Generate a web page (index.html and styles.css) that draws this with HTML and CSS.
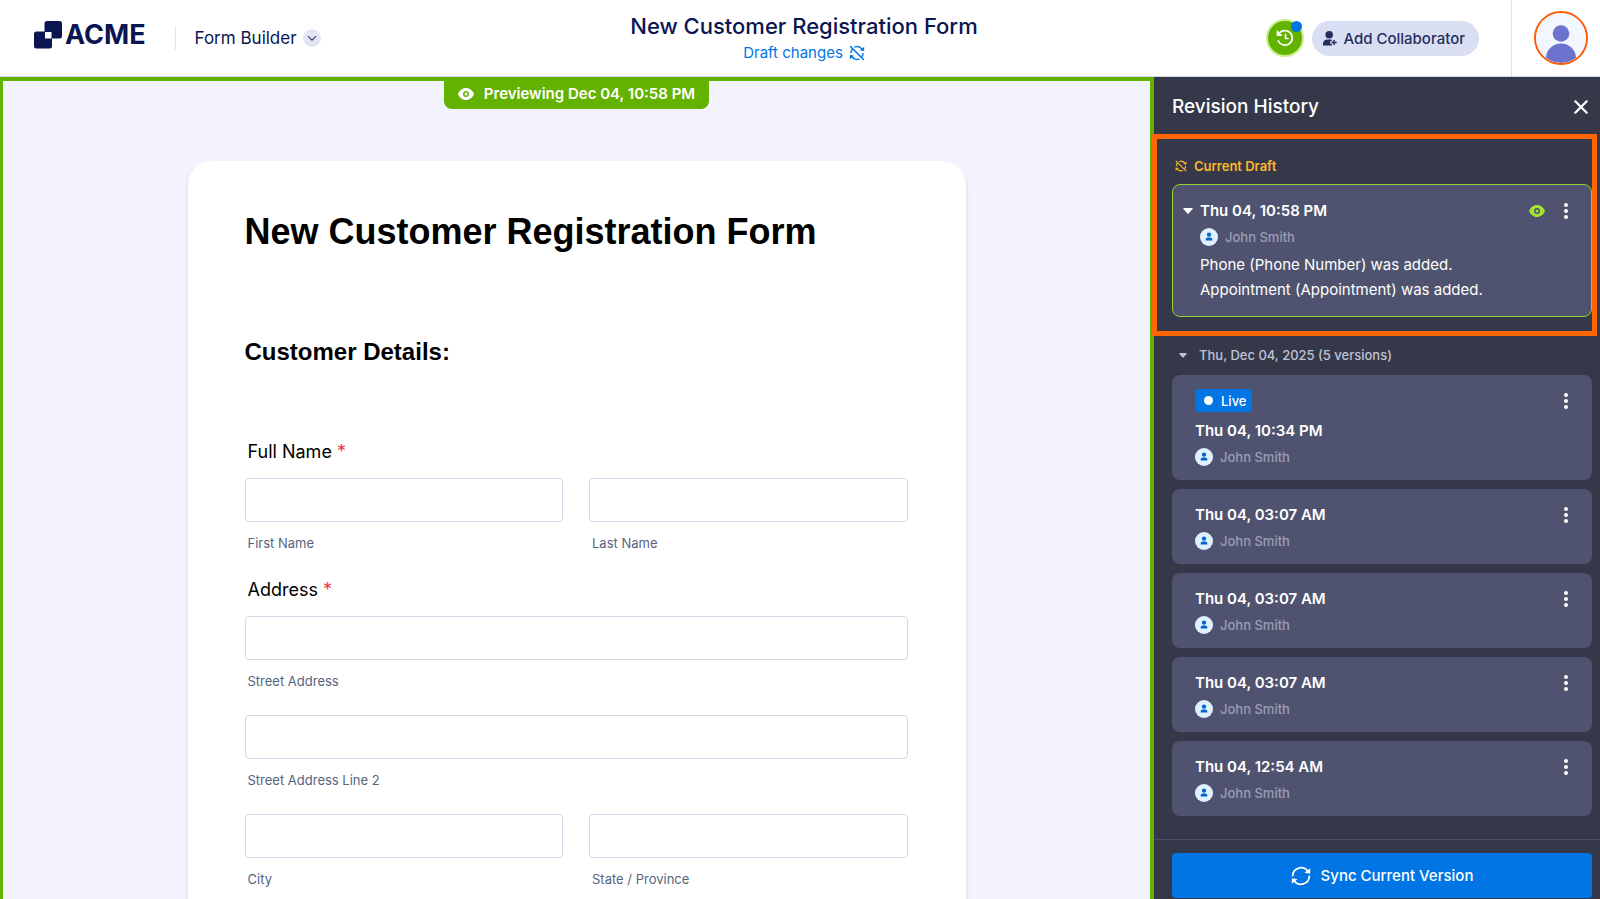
FILE: index.html
```html
<!DOCTYPE html>
<html lang="en">
<head>
<meta charset="utf-8">
<title>New Customer Registration Form</title>
<link rel="stylesheet" href="styles.css">
</head>
<body>
<svg class="sprite" aria-hidden="true">
  <symbol id="i-sync" viewBox="0 0 20 20"><g fill="none" stroke="currentColor" stroke-width="1.800" stroke-linecap="round"><path d="M1.700 9.500A8.300 8.300 0 0 1 16.800 5.300M18.300 10.500A8.300 8.300 0 0 1 3.200 14.700"/></g><path fill="currentColor" d="M19.200 2.200v5.600l-5.700-1zM.8 17.800v-5.600l5.700 1z"/></symbol>
  <symbol id="i-unsync" viewBox="0 0 16 16"><g fill="none" stroke="currentColor" stroke-width="1.500" stroke-linecap="round"><path d="M1.500 1.500l13 13M6 1.900a6.300 6.300 0 0 1 7 2.300M2 7.500a6 6 0 0 1 .8-2.700M14 8.500a6 6 0 0 1-.7 2.600M10 14.100a6.300 6.300 0 0 1-7-2.300"/></g><path fill="currentColor" d="M15.200 1.800v4.200l-4.300-.5zM.8 14.200V10l4.300.5z"/></symbol>
  <symbol id="i-person" viewBox="0 0 18 18"><circle cx="9" cy="9" r="9" fill="#dff1fe"/><circle cx="9" cy="6.700" r="2.100" fill="#0863cc"/><path fill="#0863cc" d="M5.700 12.600V11.500A1.900 1.900 0 0 1 7.600 9.600h2.800a1.900 1.900 0 0 1 1.900 1.900v1.100z"/></symbol>
  <symbol id="i-dots" viewBox="0 0 4 16"><g fill="currentColor"><circle cx="2" cy="2" r="2"/><circle cx="2" cy="8" r="2"/><circle cx="2" cy="14" r="2"/></g></symbol>
  <symbol id="i-eye" viewBox="0 0 16 12"><path fill="currentColor" fill-rule="evenodd" d="M8 0c3.600 0 6.700 2.400 8 6-1.300 3.600-4.400 6-8 6S1.300 9.600 0 6c1.300-3.600 4.400-6 8-6zm0 3a3 3 0 1 0 0 6 3 3 0 0 0 0-6z"/><circle cx="8" cy="6" r="1.500" fill="currentColor"/></symbol>
  <symbol id="i-caret" viewBox="0 0 10 6"><path fill="currentColor" d="M1 0h8a.7.7 0 0 1 .6 1.100L5.600 5.600a.8.8 0 0 1-1.200 0L.4 1.100A.7.7 0 0 1 1 0z"/></symbol>
</svg>

<header class="topbar">
  <div class="brand">
    <a class="logo" href="#">
      <svg width="28" height="28" viewBox="0 0 28 28" aria-hidden="true"><path fill="#0a1551" fill-rule="evenodd" d="M13 0h12.500A2.500 2.500 0 0 1 28 2.500v12.500a2.500 2.500 0 0 1-2.500 2.500H18V25a2.500 2.500 0 0 1-2.500 2.500h-13A2.500 2.500 0 0 1 0 25V13a2.500 2.500 0 0 1 2.500-2.500h8v-8A2.500 2.500 0 0 1 13 0zm-2 11v6.500h6.500V11z"/></svg>
      <span>ACME</span>
    </a>
    <button class="product" type="button">Form Builder
      <svg width="18" height="18" viewBox="0 0 18 18" aria-hidden="true"><circle cx="9" cy="9" r="9" fill="#e3e5f5"/><path d="M5 7.200l4 4 4-4" fill="none" stroke="#343c6a" stroke-width="1.200"/></svg>
    </button>
  </div>
  <div class="doc">
    <h1>New Customer Registration Form</h1>
    <a href="#">Draft changes <svg width="16" height="16" aria-hidden="true"><use href="#i-unsync"/></svg></a>
  </div>
  <div class="actions">
    <button class="history" type="button" aria-label="Revision history">
      <svg width="18" height="18" viewBox="0 0 18 18" fill="none" stroke="#fff" stroke-width="1.700" stroke-linecap="round" stroke-linejoin="round" aria-hidden="true"><path d="M2.300 5.800A7.300 7.300 0 1 1 2.300 12M1.500 2.300v3.900h3.900M9.500 5.300v4.200H12"/></svg>
    </button>
    <button class="collab" type="button">
      <svg width="14" height="15" viewBox="0 0 14 15" fill="currentColor" aria-hidden="true"><circle cx="6.200" cy="3.800" r="3.800"/><path d="M0 14.500v-1.800A4.200 4.200 0 0 1 4.200 8.500h3.600c.4 0 .8 0 1.100.2v1.400H7.300v2.900h1.600v1.500zM10.300 9h1.500v1.800h1.900v1.500h-1.900v1.800h-1.500v-1.800H8.400v-1.500h1.900z"/></svg>
      Add Collaborator
    </button>
    <div class="account">
      <button class="avatar" type="button" aria-label="Account">
        <svg viewBox="0 0 50 50" aria-hidden="true"><circle cx="25" cy="25" r="25" fill="#f2f7ff"/><g fill="#6c73cf"><circle cx="25" cy="20.500" r="8.300"/><path d="M10 45a15 14.500 0 0 1 30 0A25 25 0 0 1 10 45z"/></g></svg>
      </button>
    </div>
  </div>
</header>

<div class="workspace">
  <main class="preview">
    <div class="badge"><svg width="16" height="12" aria-hidden="true"><use href="#i-eye"/></svg>Previewing Dec 04, 10:58 PM</div>
    <form class="sheet">
      <h2>New Customer Registration Form</h2>
      <h3>Customer Details:</h3>
      <fieldset>
        <legend>Full Name <span class="req">*</span></legend>
        <div class="grid">
          <div class="field"><input id="first" type="text"><label for="first">First Name</label></div>
          <div class="field"><input id="last" type="text"><label for="last">Last Name</label></div>
        </div>
      </fieldset>
      <fieldset>
        <legend>Address <span class="req">*</span></legend>
        <div class="grid">
          <div class="field wide"><input id="street" type="text"><label for="street">Street Address</label></div>
          <div class="field wide"><input id="street2" type="text"><label for="street2">Street Address Line 2</label></div>
          <div class="field"><input id="city" type="text"><label for="city">City</label></div>
          <div class="field"><input id="state" type="text"><label for="state">State / Province</label></div>
        </div>
      </fieldset>
    </form>
  </main>

  <aside class="panel">
    <div class="panel-head">
      <h2>Revision History</h2>
      <button class="icon-btn" type="button" aria-label="Close"><svg width="14" height="14" viewBox="0 0 14 14" aria-hidden="true"><path d="M1.300 1.300l11.400 11.400M12.700 1.300L1.300 12.700" stroke="currentColor" stroke-width="2.200" stroke-linecap="round"/></svg></button>
    </div>
    <section class="draft">
      <h3><svg width="12" height="12" aria-hidden="true"><use href="#i-unsync"/></svg>Current Draft</h3>
      <article class="rev current">
        <button class="icon-btn toggle" type="button" aria-label="Collapse"><svg width="10" height="6"><use href="#i-caret"/></svg></button>
        <div class="rev-body">
          <h4>Thu 04, 10:58 PM</h4>
          <p class="author"><svg width="18" height="18" aria-hidden="true"><use href="#i-person"/></svg>John Smith</p>
          <ul class="changes">
            <li>Phone (Phone Number) was added.</li>
            <li>Appointment (Appointment) was added.</li>
          </ul>
        </div>
        <svg class="eye" width="16" height="12" aria-hidden="true"><use href="#i-eye"/></svg>
        <button class="icon-btn more" type="button" aria-label="More"><svg width="4" height="16"><use href="#i-dots"/></svg></button>
      </article>
    </section>
    <button class="group" type="button"><svg width="8" height="5" aria-hidden="true"><use href="#i-caret"/></svg>Thu, Dec 04, 2025 (5 versions)</button>
    <div class="list">
      <article class="rev"><div class="rev-body"><span class="live">Live</span><h4>Thu 04, 10:34 PM</h4><p class="author"><svg width="18" height="18" aria-hidden="true"><use href="#i-person"/></svg>John Smith</p></div><button class="icon-btn more" type="button" aria-label="More"><svg width="4" height="16"><use href="#i-dots"/></svg></button></article>
      <article class="rev"><div class="rev-body"><h4>Thu 04, 03:07 AM</h4><p class="author"><svg width="18" height="18" aria-hidden="true"><use href="#i-person"/></svg>John Smith</p></div><button class="icon-btn more" type="button" aria-label="More"><svg width="4" height="16"><use href="#i-dots"/></svg></button></article>
      <article class="rev"><div class="rev-body"><h4>Thu 04, 03:07 AM</h4><p class="author"><svg width="18" height="18" aria-hidden="true"><use href="#i-person"/></svg>John Smith</p></div><button class="icon-btn more" type="button" aria-label="More"><svg width="4" height="16"><use href="#i-dots"/></svg></button></article>
      <article class="rev"><div class="rev-body"><h4>Thu 04, 03:07 AM</h4><p class="author"><svg width="18" height="18" aria-hidden="true"><use href="#i-person"/></svg>John Smith</p></div><button class="icon-btn more" type="button" aria-label="More"><svg width="4" height="16"><use href="#i-dots"/></svg></button></article>
      <article class="rev"><div class="rev-body"><h4>Thu 04, 12:54 AM</h4><p class="author"><svg width="18" height="18" aria-hidden="true"><use href="#i-person"/></svg>John Smith</p></div><button class="icon-btn more" type="button" aria-label="More"><svg width="4" height="16"><use href="#i-dots"/></svg></button></article>
    </div>
    <div class="panel-foot">
      <button class="sync" type="button"><svg width="20" height="20" aria-hidden="true"><use href="#i-sync"/></svg>Sync Current Version</button>
    </div>
  </aside>
</div>
</body>
</html>
```
FILE: styles.css
```css
* { box-sizing: border-box; margin: 0; }
body {
  height: 100vh;
  display: flex;
  flex-direction: column;
  overflow: hidden;
  font-family: Inter, "Liberation Sans", sans-serif;
  color: #0a1551;
}
button { border: 0; padding: 0; background: none; font: inherit; color: inherit; cursor: pointer; }
a { text-decoration: none; color: inherit; }
svg { display: block; flex: none; }
.sprite { position: absolute; width: 0; height: 0; }

.topbar {
  flex: none;
  height: 77px;
  display: grid;
  grid-template-columns: 1fr auto 1fr;
  border-bottom: 1px solid #d5d8e4;
  background: #fff;
}
.brand { display: flex; align-items: center; padding-left: 34px; }
.logo { display: flex; align-items: center; gap: 3px; padding-bottom: 7px; font-size: 27px; line-height: 28px; font-weight: 700; }
.product {
  display: flex;
  align-items: center;
  gap: 6px;
  height: 24px;
  margin-left: 29px;
  padding-left: 19px;
  border-left: 1px solid #e3e5f5;
  font-size: 17px;
}
.doc { display: flex; flex-direction: column; align-items: center; padding: 12px 0 0 8px; }
.doc h1 { font-size: 22px; line-height: 28px; font-weight: 500; color: #0a1551; }
.doc a { display: flex; align-items: center; gap: 6px; font-size: 15px; line-height: 26px; color: #0075e3; }
.actions { display: flex; align-items: center; justify-content: flex-end; gap: 8px; }
.history {
  position: relative;
  display: grid;
  place-items: center;
  width: 38px;
  height: 38px;
  border: 2px solid #c8f090;
  border-radius: 50%;
  background: #64b200;
}
.history::after {
  content: "";
  position: absolute;
  top: 0;
  right: 0;
  width: 11px;
  height: 11px;
  border-radius: 50%;
  background: #0075e3;
}
.collab {
  display: flex;
  align-items: center;
  gap: 6px;
  height: 35px;
  padding: 0 14px 0 11px;
  border-radius: 18px;
  background: #dadef3;
  font-size: 15px;
  font-weight: 500;
  color: #252d5b;
}
.account {
  display: flex;
  align-items: center;
  align-self: stretch;
  margin-left: 24px;
  padding: 0 12px 0 22px;
  border-left: 1px solid #dfe1ea;
}
.avatar { width: 54px; height: 54px; border: 2px solid #ff5a00; border-radius: 50%; overflow: hidden; }

.workspace { flex: 1; min-height: 0; display: flex; }
.preview {
  flex: 1;
  min-width: 0;
  display: flex;
  flex-direction: column;
  align-items: center;
  overflow: hidden;
  border: solid #64b200;
  border-width: 4px 4px 0 3px;
  background: #f3f3fe;
}
.badge {
  flex: none;
  display: flex;
  align-items: center;
  gap: 10px;
  height: 28px;
  padding: 0 14px 3px;
  border-radius: 0 0 8px 8px;
  background: #64b200;
  font-size: 15px;
  font-weight: 600;
  color: #fff;
}
.sheet {
  flex: none;
  width: 778px;
  max-width: 90%;
  margin-top: 52px;
  padding: 49px 58px 40px 57px;
  border-radius: 24px;
  background: #fff;
  box-shadow: 0 4px 4px rgba(87, 100, 126, 0.2);
  color: #000;
}
.sheet h2, .sheet h3 { font-family: "Liberation Sans", Arial, sans-serif; font-weight: 700; }
.sheet h2 { font-size: 36px; line-height: 44px; }
.sheet h3 { margin: 83px 0 72px; font-size: 24px; line-height: 30px; }
fieldset { min-width: 0; padding: 0; border: 0; margin-bottom: 24px; }
legend { padding: 0 3px; margin-bottom: 13px; font-size: 18px; line-height: 26px; }
.req { color: #f23a3c; }
.grid { display: grid; grid-template-columns: 1fr 1fr; gap: 24px 26px; }
.field { display: flex; flex-direction: column; gap: 11px; }
.wide { grid-column: 1 / -1; }
.field input { width: 100%; height: 44px; border: 1px solid #d3d8e8; border-radius: 4px; padding: 0 10px; font: inherit; }
.field label { padding-left: 3px; font-size: 13px; line-height: 20px; color: #57647e; }

.panel { flex: none; width: 446px; display: flex; flex-direction: column; background: #343849; color: #fff; }
.panel-head { display: flex; align-items: center; justify-content: space-between; height: 57px; padding: 3px 12px 0 18px; }
.panel-head h2 { font-size: 19px; line-height: 28px; font-weight: 500; }
.icon-btn { display: grid; place-items: center; flex: none; }
.draft {
  margin: 0 3px 0 -2px;
  padding: 17px 0 14px 15px;
  border: 5px solid #ff6500;
}
.draft h3 { display: flex; align-items: center; gap: 7px; margin: 0 0 8px 3px; font-size: 13px; line-height: 20px; font-weight: 600; color: #ffb629; }
.rev {
  display: flex;
  align-items: flex-start;
  padding: 14px 24px 11px 23px;
  border-radius: 8px;
  background: #4f536f;
}
.current { padding: 14px 23px 14px 10px; border: 1px solid #8fd335; }
.rev-body { flex: 1; }
.toggle { width: 10px; height: 24px; margin-right: 7px; }
.rev h4 { font-size: 15px; line-height: 24px; font-weight: 600; }
.author { display: flex; align-items: center; gap: 7px; margin-top: 2px; font-size: 13px; line-height: 24px; font-weight: 500; color: #9a9db5; }
.changes { margin-top: 3px; padding: 0; list-style: none; font-size: 15px; line-height: 25px; }
.eye { margin: 6px 19px 0 0; color: #a4e32e; }
.more { width: 4px; height: 24px; }
.group { display: flex; align-items: center; gap: 12px; margin: 7px 0 8px 25px; font-size: 13px; line-height: 24px; font-weight: 500; color: #c0c3d6; }
.list { display: flex; flex-direction: column; gap: 9px; padding: 0 8px 0 18px; }
.live {
  display: flex;
  align-items: center;
  gap: 8px;
  width: max-content;
  height: 23px;
  margin-bottom: 7px;
  padding: 0 5px 0 9px;
  border-radius: 4px;
  background: #0075e3;
  font-size: 13px;
  font-weight: 500;
}
.live::before { content: ""; width: 9px; height: 9px; border-radius: 50%; background: #fff; }
.panel-foot { margin-top: auto; padding: 13px 8px 1px 18px; border-top: 1px solid #4a4e66; }
.sync {
  display: flex;
  align-items: center;
  justify-content: center;
  gap: 10px;
  width: 100%;
  height: 45px;
  border-radius: 4px;
  background: #0075e3;
  font-size: 15px;
  font-weight: 500;
}
```
